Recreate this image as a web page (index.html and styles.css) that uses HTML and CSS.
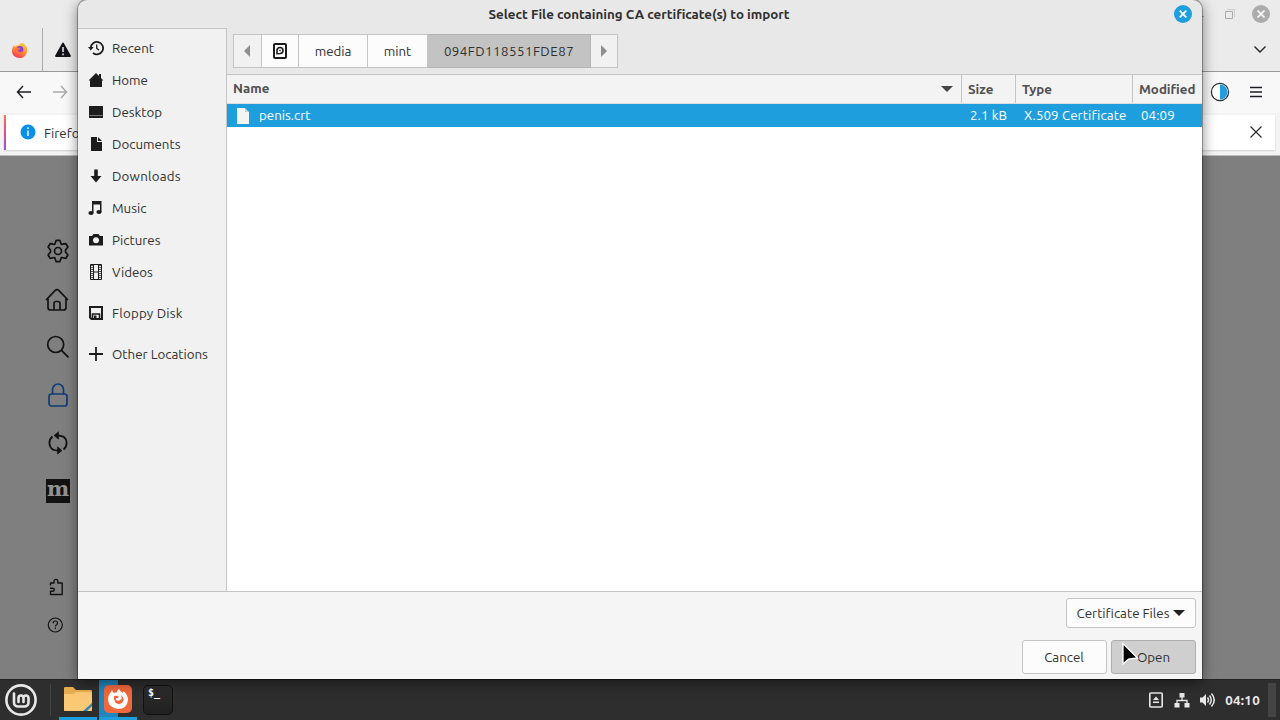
FILE: index.html
```html
<!DOCTYPE html>
<html lang="en">
<head>
    <meta charset="UTF-8">
    <meta name="viewport" content="width=device-width, initial-scale=1.0">
    <title>Select File containing CA certificate(s) to import</title>
    <link rel="stylesheet" href="styles.css">
</head>
<body>
    <div class="desktop">
        <!-- Browser window -->
        <div class="browser">
            <div class="tab-strip">
                <div class="pinned-tab">
                    <svg width="16" height="16" viewBox="0 0 16 16">
                        <defs>
                            <linearGradient id="flame" x1="0.8" y1="0" x2="0.3" y2="1">
                                <stop offset="0" stop-color="#ffd32f"/>
                                <stop offset="0.5" stop-color="#ff9335"/>
                                <stop offset="1" stop-color="#f0305a"/>
                            </linearGradient>
                        </defs>
                        <path d="M2 3 3 5 5 3 6 4C8 1 11 0 12 2 15 4 16 7 15 10 14 14 11 16 8 16 3 16 0 13 0 9 0 6 1 5 2 3z" fill="url(#flame)"/>
                        <circle cx="8" cy="7.5" r="3.4" fill="#8a42d8"/>
                        <path d="M3 6c2-1 3 0 5 0 1 1-1 2-2 2 0 2 3 3 5 1-1 4-7 4-8 0z" fill="#ff7139"/>
                    </svg>
                </div>
                <div class="tab">
                    <svg width="16" height="16" viewBox="0 0 16 16">
                        <path d="M8 1.5 15 14H1z" fill="#15141a" stroke="#15141a" stroke-width="1.8" stroke-linejoin="round"/>
                        <path d="M8 5v5M8 11.6v1.6" stroke="#f0f0f0" stroke-width="1.5"/>
                    </svg>
                </div>
                <div class="window-side">
                    <div class="window-controls">
                        <svg width="10" height="10" viewBox="0 0 10 10"><path d="M0 7.5h6" stroke="#aaa"/></svg>
                        <svg width="10" height="10" viewBox="0 0 10 10" fill="none" stroke="#aaa"><path d="M.5 2.5h7v7h-7z"/><path d="M2 .5h7.5V8" stroke="#ccc"/></svg>
                        <svg width="18" height="18" viewBox="0 0 18 18"><circle cx="9" cy="9" r="9" fill="#acacac"/><path d="m5.500 5.500 7 7m0-7-7 7" stroke="#fff" stroke-width="1.700"/></svg>
                    </div>
                    <svg class="all-tabs" width="14" height="9" viewBox="0 0 14 9"><path d="m1.500 1.500 5.500 5.500 5.500-5.500" fill="none" stroke="#222" stroke-width="1.400"/></svg>
                </div>
            </div>
            <div class="toolbar">
                <svg width="16" height="14" viewBox="0 0 16 14" fill="none" stroke="#1c1b22" stroke-width="1.400"><path d="M7 1 1.500 7 7 13M1.500 7H15"/></svg>
                <svg width="16" height="14" viewBox="0 0 16 14" fill="none" stroke="#a9a9ab" stroke-width="1.400"><path d="m9 1 5.500 6L9 13M14.500 7H1"/></svg>
                <span class="spacer"></span>
                <svg width="20" height="20" viewBox="0 0 20 20"><circle cx="10" cy="10" r="8.600" fill="#fff" stroke="#2b2a33" stroke-width="1.200"/><path d="M10 2.500a7.500 7.500 0 0 1 0 15z" fill="#229ee0"/></svg>
                <svg width="12" height="12" viewBox="0 0 12 12" stroke="#1c1b22" stroke-width="1.400"><path d="M0 1.500h12M0 6h12M0 10.500h12"/></svg>
            </div>
            <div class="notification-bar">
                <div class="notification">
                    <svg width="16" height="16" viewBox="0 0 16 16"><circle cx="8" cy="8" r="7.500" fill="#0a8fe8"/><path d="M8 3.200v1.700M8 6.500V12" stroke="#fff" stroke-width="1.400"/></svg>
                    <span class="message">Firefo</span>
                    <span class="spacer"></span>
                    <svg width="12" height="12" viewBox="0 0 12 12" stroke="#2b2a33" stroke-width="1.200"><path d="m.500.500 11 11m0-11-11 11"/></svg>
                </div>
            </div>
            <div class="settings-page">
                <nav class="categories">
                    <!-- General -->
                    <svg width="24" height="24" viewBox="0 0 24 24" fill="none" stroke="#121212" stroke-width="1.700" stroke-linejoin="round">
                        <path d="M10.200 1.300h3.600q1 2.300 1.200 3.600l1 .600q1.500-.5 3.900-.8l2 3.300q-1.500 2-2.400 3v2q.9 1 2.400 3l-2 3.300q-2.400-.3-3.900-.8l-1 .600q-.2 1.300-1.200 3.600h-3.600q-1-2.300-1.200-3.600l-1-.6q-1.500.5-3.900.8l-2-3.300q1.500-2 2.400-3v-2q-.9-1-2.400-3l2-3.300q2.400.3 3.900.8l1-.6q.2-1.300 1.200-3.600z"/>
                        <circle cx="12" cy="12" r="3.500"/>
                    </svg>
                    <!-- Home -->
                    <svg class="nudge" width="24" height="24" viewBox="0 0 24 24" fill="none" stroke="#121212" stroke-width="1.700" stroke-linecap="round" stroke-linejoin="round">
                        <path d="M1.500 12.500 10.500 3.200q1.500-1.300 3 0l9 9.300M3 12v8.500q0 2.500 2.500 2.500h13q2.500 0 2.500-2.500V12M9 22.500v-6q0-2 2-2h2q2 0 2 2v6"/>
                    </svg>
                    <!-- Search -->
                    <svg width="24" height="24" viewBox="0 0 24 24" fill="none" stroke="#121212" stroke-width="1.700"><circle cx="9.700" cy="9.500" r="8"/><path d="m15.500 15.300 7 7"/></svg>
                    <!-- Privacy -->
                    <svg width="24" height="24" viewBox="0 0 24 24" fill="none" stroke="#103b73" stroke-width="1.700"><rect x="3" y="11" width="18" height="12" rx="2.500"/><path d="M6.500 11V6.500a5.500 5.500 0 0 1 11 0V11"/></svg>
                    <!-- Sync -->
                    <svg width="24" height="24" viewBox="0 0 24 24" fill="none" stroke="#121212" stroke-width="1.800"><path d="M7 18.800A8.300 8.300 0 0 1 6.500 5.500M17 5.200a8.300 8.300 0 0 1 .5 13.300M11 4.500q4-.2 6 1.300M13 19.500q-4 .2-6-1"/><path d="M12.500.8v7.400L8 4.500zM11.500 15.800v7.400l4.500-3.700z" fill="#121212" stroke-width=".6"/></svg>
                    <span class="mozilla">m</span>
                    <div class="support-links">
                        <svg width="16" height="18" viewBox="0 0 16 18" fill="none" stroke="#121212" stroke-width="1.400" stroke-linejoin="round"><path d="M2.500 7.500V5H6V3.300a1.900 1.900 0 0 1 3.800 0V5h4.400v11.500H2.500v-3.300h2.300a1.500 1.500 0 0 0 0-3H2"/></svg>
                        <svg class="nudge" width="16" height="16" viewBox="0 0 16 16" fill="none" stroke="#121212" stroke-width="1.200"><circle cx="8.300" cy="8" r="7"/><path d="M6.100 6.300q.1-2.300 2.200-2.300t2.200 2q0 1.200-1.200 1.900-1 .6-1 1.600M8.300 10.600V12"/></svg>
                    </div>
                </nav>
            </div>
        </div>

        <!-- File chooser -->
        <div class="dialog">
            <div class="dialog-title">
                <h1>Select File containing CA certificate(s) to import</h1>
                <svg class="dialog-close" width="18" height="18" viewBox="0 0 18 18"><circle cx="9" cy="9" r="9" fill="#1f9ede"/><path d="m5.700 5.700 6.600 6.600m0-6.600-6.600 6.600" stroke="#fff" stroke-width="1.700"/></svg>
            </div>
            <div class="dialog-body">
                <ul class="places">
                    <li><svg width="16" height="16" viewBox="0 0 16 16" fill="none" stroke="#1c1c1c" stroke-width="1.800"><path d="M2.700 8A6.200 6.200 0 1 1 5 13"/><path d="M0 7h5.600L2.800 10.500z" fill="#1c1c1c" stroke="none"/><path d="M8.700 4.500V8.200L11 10.300" stroke-width="1.300"/></svg>Recent</li>
                    <li><svg width="16" height="16" viewBox="0 0 16 16"><path d="M8 1 .500 8.500H2V15h12V8.500h1.500L13 6V2h-2v2z" fill="#1c1c1c"/></svg>Home</li>
                    <li><svg width="16" height="16" viewBox="0 0 16 16"><path d="M1 2h14v12H1z" fill="#1c1c1c"/><path d="M1.500 11.500h13" stroke="#777"/></svg>Desktop</li>
                    <li><svg width="16" height="16" viewBox="0 0 16 16"><path d="M3 1h6v5h5v9H3z" fill="#1c1c1c"/><path d="m10 1 4 4h-4z" fill="#1c1c1c"/></svg>Documents</li>
                    <li class="wide"><svg width="16" height="16" viewBox="0 0 16 16"><path d="M6.200 1.500h3.600V8H13.500L8 14.500 2.500 8h3.700z" fill="#1c1c1c"/></svg>Downloads</li>
                    <li><svg width="16" height="16" viewBox="0 0 16 16" fill="#1c1c1c"><path d="M4 1h9.500v11H12V4.500H5.500V13H4z"/><ellipse cx="3" cy="13" rx="2.600" ry="2"/><ellipse cx="11" cy="12" rx="2.600" ry="2"/></svg>Music</li>
                    <li><svg width="16" height="16" viewBox="0 0 16 16"><path d="M1 4h3l1.500-2h5L12 4h3v9.500H1z" fill="#1c1c1c"/><circle cx="8" cy="8.200" r="3" fill="#f1f1f1"/></svg>Pictures</li>
                    <li><svg width="16" height="16" viewBox="0 0 16 16" fill="none" stroke="#1c1c1c"><path d="M2.500.5h11v15h-11z"/><path d="M5.500 1v14M10.500 1v14M5.500 8h5"/><path d="M4 1v14M12 1v14" stroke-width="1.500" stroke-dasharray="1 1"/></svg>Videos</li>
                    <li class="group wide"><svg width="16" height="16" viewBox="0 0 16 16"><path d="M2 2h12v12H3.500L2 12.500z" fill="none" stroke="#1c1c1c" stroke-width="2"/><path d="M4.500 14V9h7v5" fill="none" stroke="#1c1c1c" stroke-width="1.600"/><path d="M6 10.500h2.500V14H6z" fill="#1c1c1c"/></svg>Floppy Disk</li>
                    <li class="group"><svg width="16" height="16" viewBox="0 0 16 16" stroke="#1c1c1c" stroke-width="1.800"><path d="M8 1v14M1 8h14"/></svg>Other Locations</li>
                </ul>
                <div class="files">
                    <div class="path-bar">
                        <button class="step back" type="button"><svg width="6" height="12" viewBox="0 0 6 12"><path d="M6 0v12L0 6z" fill="#8e8e8e"/></svg></button>
                        <button class="drive" type="button"><svg width="16" height="16" viewBox="0 0 16 16" fill="none" stroke="#1c1c1c" stroke-width="2"><rect x="2" y="1" width="12" height="14" rx="1"/><path d="M5 10.700V7.300a3 3 0 1 1 3.200 3.200q-1 0-3.200.2z" stroke-width="1.600"/><circle cx="8" cy="7.400" r=".5" stroke-width="1"/></svg></button>
                        <button class="media" type="button">media</button>
                        <button class="mint" type="button">mint</button>
                        <button class="current" type="button">094FD118551FDE87</button>
                        <button class="step" type="button"><svg width="6" height="12" viewBox="0 0 6 12"><path d="M0 0v12l6-6z" fill="#8e8e8e"/></svg></button>
                    </div>
                    <div class="row head">
                        <span class="name">Name <svg width="12" height="6" viewBox="0 0 12 6"><path d="M0 0h12L6 6z" fill="#444"/></svg></span>
                        <span class="size">Size</span>
                        <span class="type">Type</span>
                        <span class="modified">Modified</span>
                    </div>
                    <div class="row selected">
                        <span class="name"><svg width="12" height="16" viewBox="0 0 12 16"><path d="M0 0h8v4h4v12H0z" fill="#f4f4f4"/><path d="m8 0 4 4H8z" fill="#c7d3d9"/></svg>penis.crt</span>
                        <span class="size">2.1 kB</span>
                        <span class="type">X.509 Certificate</span>
                        <span class="modified">04:09</span>
                    </div>
                    <div class="empty"></div>
                </div>
            </div>
            <div class="dialog-footer">
                <button class="filter" type="button">Certificate Files <svg width="12" height="6" viewBox="0 0 12 6"><path d="M0 0h12L6 6z" fill="#222"/></svg></button>
                <div class="actions">
                    <button class="cancel" type="button">Cancel</button>
                    <button class="open" type="button">Open</button>
                </div>
            </div>
        </div>

        <!-- Panel -->
        <div class="panel">
            <div class="menu">
                <svg width="32" height="32" viewBox="0 0 32 32" fill="none" stroke="#e8e8e8" stroke-linecap="round" stroke-linejoin="round"><circle cx="16" cy="16" r="14.600" stroke-width="2.600"/><path d="M9 9.500v9a4 4 0 0 0 4 4h6.500a4 4 0 0 0 4-4v-4.500a2.500 2.500 0 0 0-5 0V18M18.500 18v-4a2.500 2.500 0 0 0-5 0V18" stroke-width="2.600"/></svg>
            </div>
            <div class="launcher running">
                <svg width="30" height="28" viewBox="0 0 30 28"><path d="M1 3q0-1 1-1h8l3 3h15q1 0 1 1v19q0 1-1 1H2q-1 0-1-1z" fill="#e6ae4e"/><path d="M1 9h9l3-2h16v18q0 1-1 1H2q-1 0-1-1z" fill="#fbc975"/><path d="m20 26 9-8v3l-5 5z" fill="#3184b4"/></svg>
            </div>
            <div class="launcher running active">
                <svg width="30" height="30" viewBox="0 0 30 30"><rect x="1" y="1" width="28" height="28" rx="5" fill="#f0693d"/><path d="M9 6q.5 2 2 3 1.500-.7 3-.7 0-2.300 2-3.300 1 2.500 4 4l.5-2Q25 11 25 16q-1 9-10 9-9-1-10-9 0-5 3-8z" fill="#fff"/><path d="M11 12q3-.5 5 .7-1 1.500-3 1.600-.7 1.700 1 2.300 2.800.5 4.500-1.600.7-2.500-1-4 3.500 2 3 5.500-1.500 3.500-5 3.500-5-1-4.500-8z" fill="#f0693d"/></svg>
            </div>
            <div class="launcher">
                <div class="terminal">$_</div>
            </div>
            <span class="spacer"></span>
            <div class="tray">
                <svg width="16" height="16" viewBox="0 0 16 16"><rect x="1.800" y="1" width="12.400" height="14" rx="1" fill="none" stroke="#e8e8e8" stroke-width="1.600"/><path d="m8 4.500 3 3.500H5zM5 9.500h6V11H5z" fill="#e8e8e8"/></svg>
                <svg width="16" height="16" viewBox="0 0 16 16" fill="#e8e8e8"><path d="M5.500 1h5v4.500h-5zM.5 11h5v4.500h-5zM10.500 11h5v4.500h-5z"/><path d="M3 11V8.500h10V11M8 5v3.500" fill="none" stroke="#e8e8e8" stroke-width="1.300"/></svg>
                <svg width="17" height="16" viewBox="0 0 17 16" fill="none" stroke="#e8e8e8" stroke-width="1.500"><path d="M1 5.500h2.500L7 2v12l-3.500-3.500H1z" fill="#e8e8e8" stroke="none"/><path d="M8.500 5.500q2 2.500 0 5M10.500 3.500q3.500 4.500 0 9M12.500 1.500q5.500 6.500 0 13"/></svg>
                <time>04:10</time>
            </div>
            <div class="show-desktop"></div>
        </div>

        <svg class="pointer" width="19" height="26" viewBox="0 0 19 26"><path d="M2 1.500v20.500l5.500-5 9-1z" fill="#000" stroke="#fff" stroke-width="1.300"/></svg>
    </div>
</body>
</html>
```

FILE: styles.css
```css
* {
    box-sizing: border-box;
}

body {
    margin: 0;
    font-family: Ubuntu, "Noto Sans", sans-serif;
    font-size: 13.333px;
    color: #303030;
}

svg {
    display: block;
    flex: none;
}

button {
    margin: 0;
    padding: 0;
    font: inherit;
    color: inherit;
}

.spacer {
    flex: 1;
}

.desktop {
    position: relative;
    display: flex;
    flex-direction: column;
    width: 1280px;
    height: 720px;
    overflow: hidden;
}

/* Browser */
.browser {
    flex: 1;
    display: flex;
    flex-direction: column;
    background: #7f7f7f;
}

.tab-strip {
    display: flex;
    align-items: flex-end;
    height: 72px;
    background: #ebebeb;
    border-bottom: 1px solid #999;
}

.pinned-tab,
.tab {
    display: flex;
    align-items: center;
    height: 43px;
}

.pinned-tab {
    width: 43px;
    padding-left: 12px;
    border-right: 1px solid #aaa;
}

.tab {
    padding-left: 12px;
}

.window-side {
    display: flex;
    flex-direction: column;
    align-items: flex-end;
    align-self: stretch;
    gap: 22px;
    margin-left: auto;
    padding: 5px 10px 0 0;
}

.window-controls {
    display: flex;
    align-items: center;
    gap: 17px;
}

.all-tabs {
    margin-right: 3px;
}

.toolbar {
    display: flex;
    align-items: center;
    gap: 20px;
    height: 41px;
    padding: 0 18px 2px 16px;
    background: #f8f8f8;
}

.notification-bar {
    height: 43px;
    padding: 2px 5px 5px 4px;
    background: #f4f4f4;
    border-bottom: 1px solid #bbb;
}

.notification {
    display: flex;
    align-items: center;
    gap: 8px;
    height: 35px;
    padding: 0 13px 2px 14px;
    background: #fff;
    border-left: 2px solid;
    border-image: linear-gradient(#f2784f, #d95291, #8a5ad8) 1;
    box-shadow: 0 1px 2px rgba(0, 0, 0, 0.15);
}

.message {
    padding-top: 4px;
}

.settings-page {
    flex: 1;
}

.categories {
    display: flex;
    flex-direction: column;
    gap: 24px;
    width: 70px;
    padding: 83px 0 0 46px;
}

.mozilla {
    width: 24px;
    height: 24px;
    background: #121212;
    color: #929292;
    font: bold 21px/19px "DejaVu Serif", serif;
    text-align: center;
}

.nudge {
    margin-left: -1px;
}

.support-links {
    display: flex;
    flex-direction: column;
    gap: 21px;
    margin: 51px 0 0 2px;
}

/* File chooser */
.dialog {
    position: absolute;
    left: 78px;
    top: 0;
    display: flex;
    flex-direction: column;
    width: 1124px;
    height: 679px;
    background: #e8e8e8;
    border-radius: 9px 9px 0 0;
    box-shadow: 0 0 0 1px rgba(0, 0, 0, 0.3), 0 3px 14px rgba(0, 0, 0, 0.5);
    overflow: hidden;
}

.dialog-title {
    position: relative;
    height: 28px;
}

.dialog-title h1 {
    margin: 0;
    padding: 1px 2px 0 0;
    font-size: 13.333px;
    font-weight: 600;
    line-height: 28px;
    text-align: center;
}

.dialog-close {
    position: absolute;
    top: 5px;
    right: 10px;
}

.dialog-body {
    display: flex;
    flex: 1;
}

.places {
    width: 149px;
    margin: 0;
    padding: 3px 0 0;
    list-style: none;
    background: #f1f1f1;
    border-top: 1px solid #c4c4c4;
    border-right: 1px solid #c4c4c4;
}

.places li {
    display: flex;
    align-items: center;
    gap: 8px;
    height: 32px;
    padding-left: 10px;
    white-space: nowrap;
}

.places .group {
    margin-top: 9px;
}

.places .wide {
    letter-spacing: 0.2px;
}

.files {
    flex: 1;
    display: flex;
    flex-direction: column;
}

.path-bar {
    display: flex;
    height: 46px;
    padding: 6px;
}

.path-bar button {
    display: flex;
    align-items: center;
    justify-content: center;
    height: 34px;
    background: #fcfcfc;
    border: solid #c4c4c4;
    border-width: 1px 1px 1px 0;
}

.path-bar .step {
    width: 27px;
    background: #f1f1f1;
}

.path-bar .back {
    width: 29px;
    padding-right: 1px;
    border-left-width: 1px;
}

.path-bar .drive {
    width: 37px;
}

.path-bar .media {
    width: 69px;
}

.path-bar .mint {
    width: 60px;
}

.path-bar .current {
    width: 163px;
    background: #c3c3c3;
    border-color: #b4b4b4;
    letter-spacing: 0.45px;
}

.row {
    display: flex;
    height: 23px;
    line-height: 23px;
}

.row span {
    white-space: nowrap;
}

.name {
    display: flex;
    align-items: center;
    gap: 10px;
    flex: 1;
    padding-left: 10px;
}

.size {
    width: 54px;
    padding-left: 8px;
}

.type {
    width: 117px;
    padding-left: 8px;
}

.modified {
    width: 69px;
    padding-left: 8px;
}

.head {
    height: 30px;
    line-height: 30px;
    font-weight: 700;
    color: #505050;
    background: #f3f3f3;
    border-top: 1px solid #c4c4c4;
    border-bottom: 1px solid #ddd;
}

.head span {
    height: 28px;
    padding-left: 6px;
    border-right: 1px solid #c4c4c4;
}

.head .name {
    justify-content: space-between;
    padding-right: 8px;
}

.head .modified {
    border-right: 0;
}

.selected {
    background: #1f9ede;
    color: #fff;
}

.selected .size,
.selected .type,
.selected .modified {
    letter-spacing: 0.1px;
}

.empty {
    flex: 1;
    background: #fff;
}

.dialog-footer {
    display: flex;
    flex-direction: column;
    align-items: flex-end;
    gap: 12px;
    height: 88px;
    padding: 6px 6px 0;
    background: #f5f5f5;
    border-top: 1px solid #c4c4c4;
}

.dialog-footer button {
    background: #fcfcfc;
    border: 1px solid #c4c4c4;
    border-radius: 3px;
}

.dialog-footer .filter {
    display: flex;
    align-items: center;
    justify-content: center;
    gap: 4px;
    width: 130px;
    height: 30px;
}

.actions {
    display: flex;
    gap: 4px;
}

.actions button {
    width: 85px;
    height: 34px;
}

.actions .cancel {
    padding-right: 1px;
}

.actions .open {
    background: #cfcfcf;
    border-color: #aeaeae;
}

/* Panel */
.panel {
    display: flex;
    align-items: center;
    height: 41px;
    background: #2e2e2e;
    border-top: 1px solid #232323;
}

.menu {
    width: 51px;
    padding-left: 5px;
    border-right: 1px solid #434343;
}

.launcher {
    display: flex;
    align-items: center;
    justify-content: center;
    width: 38px;
    height: 40px;
    margin-right: 2px;
}

.menu + .launcher {
    margin-left: 8px;
}

.running {
    border-bottom: 3px solid #1f9ede;
}

.active {
    background: linear-gradient(90deg, #1f86be 50%, transparent 50%);
}

.terminal {
    width: 30px;
    height: 30px;
    padding: 0 4px;
    background: linear-gradient(#2d2d2d, #202020);
    border: 1px solid #111;
    border-radius: 5px;
    color: #fff;
    font: bold 10px/13px "DejaVu Sans Mono", monospace;
}

.tray {
    display: flex;
    align-items: center;
    gap: 9px;
    color: #e8e8e8;
    font-weight: 700;
}

.tray svg:first-child {
    margin-right: 1px;
}

.tray time {
    letter-spacing: 0.3px;
}

.show-desktop {
    width: 8px;
    height: 34px;
    margin-left: 8px;
    margin-right: 4px;
    background: #444;
}

.pointer {
    position: absolute;
    left: 1121px;
    top: 642px;
}
```
